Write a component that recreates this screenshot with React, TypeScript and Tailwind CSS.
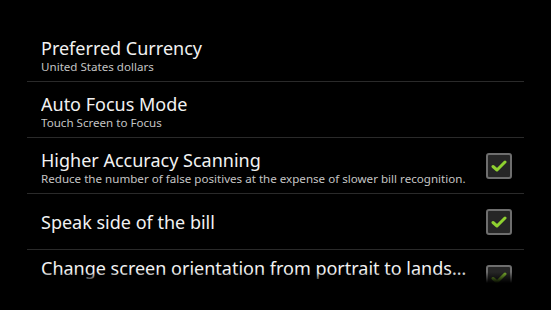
const Check = ({ dim }: { dim?: boolean }) => (
  <div className="w-[26px] h-[26px] shrink-0 rounded-[3px] border-2 border-[#6e6e6e] bg-[#262626] flex items-center justify-center">
    <svg width="16" height="12" viewBox="0 0 16 12" className={dim ? "opacity-80" : ""}>
      <polyline
        points="2,6.5 6,10 14,2"
        fill="none"
        stroke="#8fd130"
        strokeWidth="3"
        strokeLinecap="round"
        strokeLinejoin="round"
      />
    </svg>
  </div>
);

interface RowProps {
  title: string;
  summary?: string;
  checked?: boolean;
}

const Row = ({ title, summary, checked }: RowProps) => (
  <div className="h-[56px] flex border-b border-[#2a2a2a] pl-[14px] pr-[12px]">
    <div className={`flex-1 min-w-0 ${summary ? "pt-[11px]" : "pt-[17px]"}`}>
      <div className="text-[18px] leading-[23px] text-[#f2f2f2] truncate">{title}</div>
      {summary && (
        <div className="-mt-[1px] text-[11.6px] leading-[15px] text-[#c4c4c4] truncate">{summary}</div>
      )}
    </div>
    {checked !== undefined && (
      <div className="self-center">
        <Check />
      </div>
    )}
  </div>
);

export default function App() {
  return (
    <div
      className="relative w-[551px] h-[310px] bg-black overflow-hidden"
      style={{ fontFamily: '"Noto Sans", "Open Sans", sans-serif' }}
    >
      <div className="pt-[26px] px-[27px]">
        <Row title="Preferred Currency" summary="United States dollars" />
        <Row title="Auto Focus Mode" summary="Touch Screen to Focus" />
        <Row
          title="Higher Accuracy Scanning"
          summary="Reduce the number of false positives at the expense of slower bill recognition."
          checked
        />
        <Row title="Speak side of the bill" checked />
        <div className="h-[56px] flex items-start pl-[14px] pr-[12px]">
          <div className="flex-1 min-w-0 pt-[7px] pr-[16px] text-[18px] leading-[23px] text-[#f2f2f2] truncate">
            Change screen orientation from portrait to landscape
          </div>
          <div className="pt-[15px]">
            <Check dim />
          </div>
        </div>
      </div>
      <div className="absolute left-0 right-0 top-[272px] bottom-0 bg-[linear-gradient(to_bottom,transparent,black_11px)]" />
    </div>
  );
}
